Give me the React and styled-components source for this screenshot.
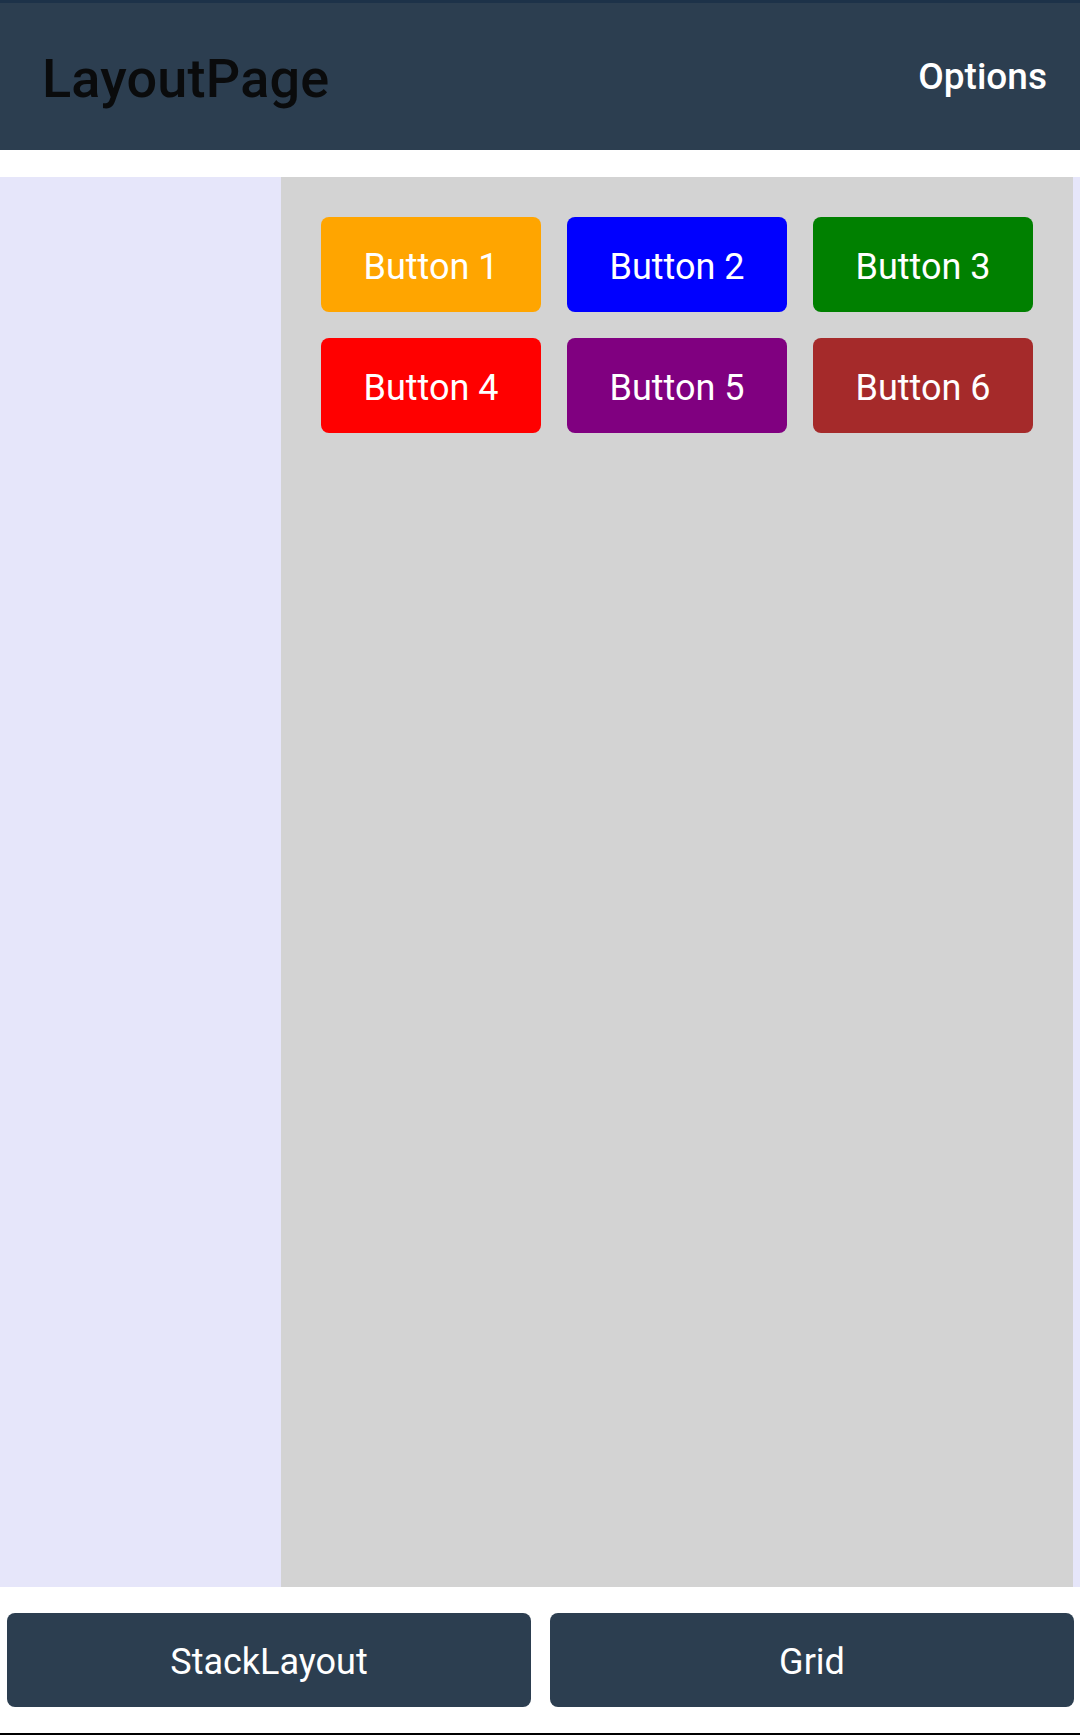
import React from "react";
import styled, { createGlobalStyle } from "styled-components";

const GlobalStyle = createGlobalStyle`
  html, body {
    margin: 0;
    padding: 0;
    background: #ffffff;
    font-family: Roboto, "Noto Sans", sans-serif;
  }
`;

const tiles = [
  { label: "Button 1", color: "#ffa500" },
  { label: "Button 2", color: "#0000ff" },
  { label: "Button 3", color: "#008000" },
  { label: "Button 4", color: "#ff0000" },
  { label: "Button 5", color: "#800080" },
  { label: "Button 6", color: "#a52a2a" },
];

const App = () => {
  return (
    <>
      <GlobalStyle />
      <Page>
        <StatusStrip />
        <Header>
          <Title>LayoutPage</Title>
          <Options>Options</Options>
        </Header>
        <Body>
          <SidePanel />
          <Main>
            <TileGrid>
              {tiles.map((t) => (
                <Tile key={t.label} $bg={t.color}>
                  {t.label}
                </Tile>
              ))}
            </TileGrid>
          </Main>
          <SidePanel />
        </Body>
        <Footer>
          <NavButton>StackLayout</NavButton>
          <NavButton>Grid</NavButton>
        </Footer>
        <BottomEdge />
      </Page>
    </>
  );
};

const Page = styled.div`
  width: 1080px;
  height: 1735px;
  display: flex;
  flex-direction: column;
  background: #ffffff;
`;

const StatusStrip = styled.div`
  height: 3px;
  background: #1d3249;
`;

const Header = styled.header`
  height: 147px;
  background: #2c3e50;
  display: flex;
  align-items: center;
  justify-content: space-between;
  padding: 0 33px 0 42px;
`;

const Title = styled.h1`
  margin: 0;
  margin-top: 4px;
  font-size: 54px;
  font-weight: 500;
  color: #0a0b0c;
  letter-spacing: 0.2px;
`;

const Options = styled.span`
  font-size: 37px;
  font-weight: 500;
  color: #ffffff;
`;

const Body = styled.div`
  margin-top: 27px;
  height: 1410px;
  display: grid;
  grid-template-columns: 281px 1fr 7px;
`;

const SidePanel = styled.div`
  background: #e6e6fa;
`;

const Main = styled.div`
  background: #d3d3d3;
  padding: 40px;
`;

const TileGrid = styled.div`
  display: grid;
  grid-template-columns: repeat(3, 220px);
  grid-auto-rows: 95px;
  gap: 26px;
`;

const Tile = styled.button`
  border: none;
  border-radius: 8px;
  background: ${({ $bg }) => $bg};
  color: #ffffff;
  font-family: Roboto, sans-serif;
  font-size: 36px;
  display: flex;
  align-items: center;
  justify-content: center;
  padding: 4px 0 0;
`;

const Footer = styled.div`
  margin-top: 26px;
  height: 94px;
  display: grid;
  grid-template-columns: 1fr 1fr;
  gap: 19px;
  padding: 0 6px 0 7px;
`;

const NavButton = styled.button`
  border: none;
  border-radius: 8px;
  background: #2c3e50;
  color: #ffffff;
  font-family: Roboto, sans-serif;
  font-size: 36px;
  padding: 4px 0 0;
`;

const BottomEdge = styled.div`
  margin-top: auto;
  height: 2px;
  background: #000000;
`;

export default App;
